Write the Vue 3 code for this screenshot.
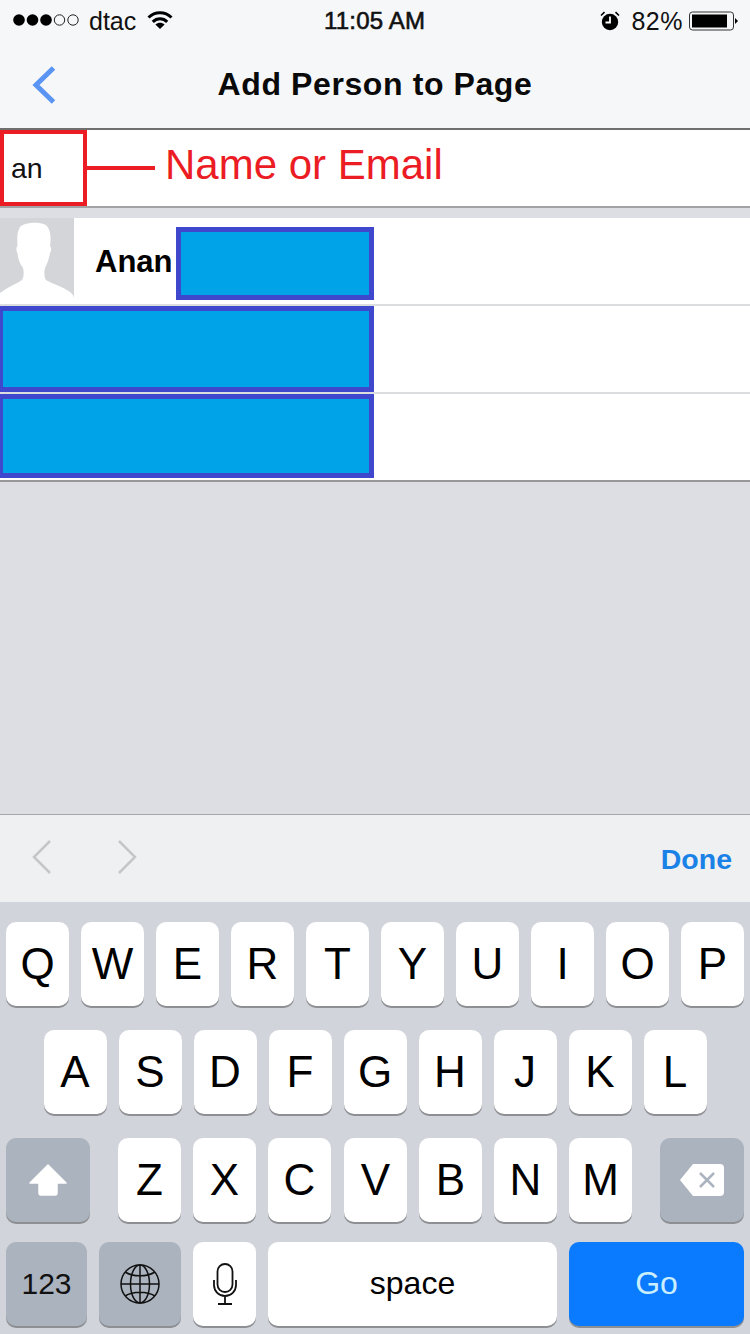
<script setup>
const row1 = ['Q','W','E','R','T','Y','U','I','O','P']
const row2 = ['A','S','D','F','G','H','J','K','L']
const row3 = ['Z','X','C','V','B','N','M']
</script>

<template>
  <div class="screen">
    <header class="header">
      <div class="status">
        <div class="status-left">
          <svg class="dots" width="68" height="14" viewBox="0 0 68 14">
            <circle cx="6" cy="7" r="5.800" fill="#000"/>
            <circle cx="19.500" cy="7" r="5.800" fill="#000"/>
            <circle cx="33" cy="7" r="5.800" fill="#000"/>
            <circle cx="46.500" cy="7" r="5.200" fill="none" stroke="#222" stroke-width="1"/>
            <circle cx="60" cy="7" r="5.200" fill="none" stroke="#222" stroke-width="1"/>
          </svg>
          <span class="carrier">dtac</span>
          <svg class="wifi" width="26" height="18" viewBox="0 0 26 18" fill="none" stroke="#000" stroke-width="3">
            <path d="M1.500 6.500C8 .2 18 .2 24.500 6.500"/>
            <path d="M5.800 10.800C10 6.800 16 6.800 20.200 10.800"/>
            <path d="M13 18L8.400 13.400C11 11.300 15 11.300 17.600 13.400Z" fill="#000" stroke="none"/>
          </svg>
        </div>
        <span class="time">11:05 AM</span>
        <div class="status-right">
          <svg width="20" height="20" viewBox="0 0 20 20">
            <circle cx="10" cy="11" r="8.200" fill="#000"/>
            <path d="M10 5.500V11.500H5.500" fill="none" stroke="#fff" stroke-width="1.800"/>
            <path d="M1 4.500L4.500 1.200M19 4.500L15.500 1.200" stroke="#000" stroke-width="1.600"/>
          </svg>
          <span class="percent">82%</span>
          <svg width="50" height="20" viewBox="0 0 50 20">
            <rect x="0.500" y="1" width="44" height="18" rx="3" fill="none" stroke="#333" stroke-width="1"/>
            <rect x="3" y="3.500" width="35" height="13" fill="#000"/>
            <path d="M46 7L49 10L46 13Z" fill="#000"/>
          </svg>
        </div>
      </div>
      <nav class="nav">
        <svg class="back" width="26" height="40" viewBox="0 0 26 40">
          <path d="M22.500 3L5 20L22.500 37" fill="none" stroke="#5b95f3" stroke-width="5"/>
        </svg>
        <h1 class="title">Add Person to Page</h1>
      </nav>
    </header>

    <section class="search">
      <div class="field">an</div>
      <div class="leader"></div>
      <div class="hint">Name or Email</div>
    </section>

    <section class="results">
      <div class="person">
        <svg class="avatar" width="74" height="80" viewBox="0 0 74 80">
          <rect width="74" height="80" fill="#d3d5d9"/>
          <path d="M0 75C8 69 16 66 22 62C24 59 24 54 23 50C20 46 18 41 17.500 35C16 33 16 29 17.500 28C17 20 17 14 20 9C24 4 42 3 47 8C51 13 51 21 50 28C52 30 51 34 50 35C49 41 47 46 45 50C44 54 44 59 46 62C54 67 68 70 73 77L74 80H0Z" fill="#fff"/>
        </svg>
        <span class="name">Anan</span>
        <div class="redact redact-short"></div>
      </div>
      <div class="person person-plain"><div class="redact redact-full"></div></div>
      <div class="person person-plain person-last"><div class="redact redact-full redact-last"></div></div>
    </section>

    <div class="empty"></div>

    <div class="toolbar">
      <svg width="24" height="36" viewBox="0 0 24 36" class="prev">
        <path d="M20 2L4 18L20 34" fill="none" stroke="#c5c6c8" stroke-width="2.500"/>
      </svg>
      <svg width="24" height="36" viewBox="0 0 24 36" class="next">
        <path d="M4 2L20 18L4 34" fill="none" stroke="#c5c6c8" stroke-width="2.500"/>
      </svg>
      <span class="done">Done</span>
    </div>

    <div class="keyboard">
      <div class="kb-row">
        <div v-for="k in row1" :key="k" class="key">{{ k }}</div>
      </div>
      <div class="kb-row kb-center">
        <div v-for="k in row2" :key="k" class="key">{{ k }}</div>
      </div>
      <div class="kb-row kb-third">
        <div class="key key-fn key-wide">
          <svg width="38" height="32" viewBox="0 0 38 32">
            <path d="M19 1L37 19H28V29a2 2 0 0 1-2 2H12a2 2 0 0 1-2-2V19H1Z" fill="#fff" stroke="#fff" stroke-width="1.500" stroke-linejoin="round"/>
          </svg>
        </div>
        <div class="letters">
          <div v-for="k in row3" :key="k" class="key">{{ k }}</div>
        </div>
        <div class="key key-fn key-wide">
          <svg width="44" height="32" viewBox="0 0 44 32">
            <path d="M13 0H40a4 4 0 0 1 4 4V28a4 4 0 0 1-4 4H13L0 16Z" fill="#fff"/>
            <path d="M20 9L34 23M34 9L20 23" stroke="#abb3be" stroke-width="2.500"/>
          </svg>
        </div>
      </div>
      <div class="kb-row kb-bottom">
        <div class="key key-fn key-123">123</div>
        <div class="key key-fn key-globe">
          <svg width="40" height="40" viewBox="0 0 40 40" fill="none" stroke="#111" stroke-width="1.500">
            <circle cx="20" cy="20" r="19"/>
            <ellipse cx="20" cy="20" rx="9.500" ry="19"/>
            <path d="M20 1V39M1 20H39M5 8C13 13 27 13 35 8M5 32C13 27 27 27 35 32"/>
          </svg>
        </div>
        <div class="key key-mic">
          <svg width="24" height="42" viewBox="0 0 24 42" fill="none" stroke="#111" stroke-width="1.800">
            <rect x="4.500" y="1" width="15" height="28" rx="7.500"/>
            <path d="M1 17V22a11 11 0 0 0 22 0V17M12 33V40.500M5 41H19"/>
          </svg>
        </div>
        <div class="key key-space">space</div>
        <div class="key key-go">Go</div>
      </div>
    </div>
  </div>
</template>

<style scoped>
.screen {
  width: 750px;
  height: 1334px;
  display: flex;
  flex-direction: column;
  overflow: hidden;
  background: #dcdee3;
  font-family: "Liberation Sans", Arial, sans-serif;
  color: #000;
}
.header {
  height: 128px;
  flex: none;
  background: #f6f7f9;
}
.status {
  height: 42px;
  display: flex;
  align-items: center;
  justify-content: space-between;
  padding: 0 11px 0 13px;
  position: relative;
}
.status-left, .status-right {
  display: flex;
  align-items: center;
}
.dots { margin-top: -2px; }
.carrier {
  font-size: 25px;
  margin-left: 8px;
  color: #111;
}
.wifi { margin-left: 11px; margin-top: -3px; }
.time {
  font-size: 24px;
  font-weight: 400;
  -webkit-text-stroke: 0.6px #111;
  color: #111;
  position: absolute;
  left: 324px;
  letter-spacing: 0.2px;
}
.percent {
  font-size: 25px;
  margin: 0 6px 0 11px;
  letter-spacing: 0.5px;
  color: #111;
}
.nav {
  height: 86px;
  display: flex;
  align-items: center;
  justify-content: center;
  position: relative;
}
.back {
  position: absolute;
  left: 31px;
  top: 23px;
}
.title {
  margin: 0 0 1px;
  font-size: 32px;
  font-weight: 700;
  letter-spacing: 0.6px;
  color: #0a0a0a;
}
.search {
  height: 80px;
  flex: none;
  box-sizing: border-box;
  background: #fff;
  border-top: 2px solid #6f6f6f;
  border-bottom: 2px solid #a3a3a5;
  display: flex;
  align-items: center;
}
.field {
  width: 87px;
  height: 76px;
  box-sizing: border-box;
  border: 4px solid #ec1c24;
  font-size: 28.500px;
  padding: 17px 0 0 7px;
  color: #111;
  line-height: 34px;
}
.leader {
  width: 68px;
  height: 4px;
  background: #ec1c24;
  margin-top: 0;
}
.hint {
  font-size: 42px;
  color: #ec1c24;
  margin: -6px 0 0 10px;
}
.results {
  flex: none;
  margin-top: 10px;
  background: #fff;
  border-bottom: 2px solid #98989a;
}
.person {
  height: 86px;
  display: flex;
  align-items: flex-start;
  border-bottom: 2px solid #dcdddf;
}
.person-last {
  border-bottom: 0;
}
.avatar {
  display: block;
  flex: none;
}
.name {
  font-size: 31px;
  font-weight: 700;
  margin: 26px 3px 0 21px;
  line-height: 36px;
  width: 78px;
}
.redact {
  box-sizing: border-box;
  background: #00a2e8;
  border: 5px solid #3f48cc;
}
.redact-short {
  width: 198px;
  height: 73px;
  margin-top: 9px;
}
.redact-full {
  width: 374px;
  height: 86px;
  border-left-width: 3px;
}
.redact-last {
  height: 84px;
}
.empty {
  flex: 1;
}
.toolbar {
  height: 88px;
  flex: none;
  box-sizing: border-box;
  background: #eff0f2;
  border-top: 1px solid #a6a7ab;
  display: flex;
  align-items: center;
  padding: 0 18px 0 30px;
}
.prev, .next { margin-top: -4px; }
.next { margin-left: 61px; }
.done {
  margin-left: auto;
  font-size: 28.500px;
  font-weight: 700;
  color: #1a82e6;
  margin-top: 2px;
}
.keyboard {
  height: 432px;
  flex: none;
  box-sizing: border-box;
  background: #d1d5db;
  padding: 20px 6px 0;
  display: flex;
  flex-direction: column;
  gap: 24px;
}
.kb-row {
  display: flex;
  gap: 12px;
  height: 84px;
}
.kb-center {
  justify-content: center;
}
.kb-third {
  justify-content: space-between;
}
.letters {
  display: flex;
  gap: 12px;
}
.letters .key:nth-child(4) {
  margin-left: 1px;
}
.kb-bottom { margin-top: -4px; }
.key {
  width: 63px;
  height: 84px;
  flex: none;
  background: #fff;
  border-radius: 10px;
  box-shadow: 0 2px 0 #8d8f93;
  display: flex;
  align-items: center;
  justify-content: center;
  font-size: 44px;
  color: #000;
}
.key-fn {
  background: #abb3be;
}
.key-wide { width: 84px; }
.key-123 {
  width: 81px;
  font-size: 30px;
  color: #111;
}
.key-globe { width: 82px; }
.key-space {
  width: 289px;
  font-size: 32px;
  padding-bottom: 2px;
  box-sizing: border-box;
}
.key-go {
  width: 175px;
  background: #0a7aff;
  color: #c9efff;
  font-size: 32px;
  padding-bottom: 2px;
  box-sizing: border-box;
}
</style>

<style>
html, body { margin: 0; padding: 0; background: #dcdee3; }
</style>
